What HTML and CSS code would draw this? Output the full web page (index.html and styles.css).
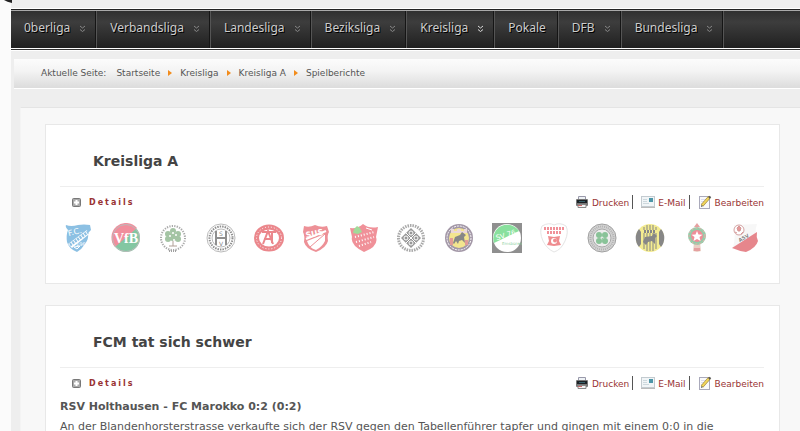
FILE: index.html
```html
<!DOCTYPE html>
<html lang="de">
<head>
    <meta charset="UTF-8">
    <meta name="viewport" content="width=device-width, initial-scale=1.0">
    <title>Kreisliga A - Spielberichte</title>
    <link rel="stylesheet" href="styles.css">
</head>
<body>

    <!-- Shared icons -->
    <svg class="sprite" aria-hidden="true">
        <symbol id="chevrons" viewBox="0 0 7 8">
            <path d="M1 1l2.5 2L6 1M1 4.500l2.500 2L6 4.500" fill="none" stroke="currentColor"/>
        </symbol>
        <symbol id="plus" viewBox="0 0 9 9">
            <rect x=".5" y=".5" width="8" height="8" rx="1" fill="#aaa" stroke="#777"/>
            <path d="M4.500 2v5M2 4.500h5" stroke="#fff" stroke-width="2"/>
        </symbol>
        <symbol id="printer" viewBox="0 0 14 14">
            <path d="M3.500 1.500h7v4h-7z" fill="#eef2f5" stroke="#99a"/>
            <rect x="1" y="4" width="12" height="7" rx="1" fill="#777"/>
            <path d="M2 5h10v3H2z" fill="#1c2226"/>
            <path d="M4 6.500h6" stroke="#38606a"/>
            <path d="M3 9.500h8v3H3z" fill="#f4f4f4" stroke="#888"/>
            <path d="M3 10.500h4" stroke="#c66"/>
        </symbol>
        <symbol id="mail" viewBox="0 0 14 12">
            <rect x=".5" y=".5" width="13" height="10" fill="#f1f5f7" stroke="#c3cbd0"/>
            <path d="M0 11.500h14" stroke="#bbb"/>
            <rect x="8" y="2" width="4" height="4" fill="#4d96a8"/>
            <path d="M2 3.500h4M2 5.500h4M2 7.500h6" stroke="#cdd8dd"/>
        </symbol>
        <symbol id="edit" viewBox="0 0 14 14">
            <rect x="1.500" y="1.500" width="10" height="12" fill="#fafafa" stroke="#aab"/>
            <path d="M3 4.500h6M3 6.500h5M3 8.500h3" stroke="#dde"/>
            <path d="M4 10.500L11.500 2" stroke="#8a7430" stroke-width="3"/>
            <path d="M4 10.500L11 2.500" stroke="#f0d45c" stroke-width="2"/>
            <path d="M11 3l1.500-1.500" stroke="#555" stroke-width="2"/>
            <path d="M3 12l.5-2 1.500 1z" fill="#444"/>
        </symbol>
    </svg>

    <svg class="corner" viewBox="0 0 8 3" aria-hidden="true"><path d="M0 0h8v3Q3 2 0 0z" fill="#222"/></svg>

    <div class="page">
        <nav class="menu">
            <ul>
                <li><a class="parent" href="#">0berliga<svg><use href="#chevrons"/></svg></a></li>
                <li><a class="parent" href="#">Verbandsliga<svg><use href="#chevrons"/></svg></a></li>
                <li><a class="parent" href="#">Landesliga<svg><use href="#chevrons"/></svg></a></li>
                <li><a class="parent" href="#">Beziksliga<svg><use href="#chevrons"/></svg></a></li>
                <li><a class="parent active" href="#">Kreisliga<svg><use href="#chevrons"/></svg></a></li>
                <li><a href="#">Pokale</a></li>
                <li><a class="parent" href="#">DFB<svg><use href="#chevrons"/></svg></a></li>
                <li><a class="parent" href="#">Bundesliga<svg><use href="#chevrons"/></svg></a></li>
            </ul>
        </nav>

        <div class="breadcrumbs">
            <span class="here">Aktuelle Seite:</span>
            <a href="#">Startseite</a>
            <span class="arrow"></span>
            <a href="#">Kreisliga</a>
            <span class="arrow"></span>
            <a href="#">Kreisliga A</a>
            <span class="arrow"></span>
            <span>Spielberichte</span>
        </div>

        <main class="content">
            <article class="card">
                <h2>Kreisliga A</h2>
                <div class="info">
                    <a class="details" href="#"><svg><use href="#plus"/></svg>Details</a>
                    <ul class="actions">
                        <li><a href="#"><svg><use href="#printer"/></svg>Drucken</a></li>
                        <li><a href="#"><svg><use href="#mail"/></svg>E-Mail</a></li>
                        <li><a href="#"><svg><use href="#edit"/></svg>Bearbeiten</a></li>
                    </ul>
                </div>

                <!-- Club crests -->
                <div class="clubs">
                    <svg viewBox="0 0 30 30">
                        <path d="M3 2q5 2 12 0 6-1 12 0l1 5-3 3q1 6-3 11-3 5-8 8-8-3-10-10-1-7 1-12-3-3-2-5z" fill="#1b83c9"/>
                        <path d="M5 21L24 7l1 5L9 25z" fill="#fff"/>
                        <path d="M7 22L25 9" stroke="#1b83c9" stroke-width="3" stroke-dasharray="2 1"/>
                        <text x="5" y="12" font-size="8" fill="#fff" transform="rotate(-14 10 10)">F.C.</text>
                        <path d="M11 24l6-1-3 3z" fill="none" stroke="#fff"/>
                        <text x="13" y="23" font-size="5" fill="#fff">1960</text>
                    </svg>
                    <svg viewBox="0 0 30 30">
                        <circle cx="15" cy="15" r="14" fill="#0a9148"/>
                        <path d="M4 24A14 14 0 0 1 26 5z" fill="#e5203c"/>
                        <circle cx="15" cy="15" r="13.500" fill="none" stroke="#777"/>
                        <text x="15" y="20" font-size="14" font-weight="bold" text-anchor="middle" fill="#fff" class="crest-serif">VfB</text>
                    </svg>
                    <svg viewBox="0 0 30 30">
                        <circle cx="15" cy="15" r="12" fill="none" stroke="#555" stroke-width="2" stroke-dasharray="1 1" pathLength="60"/>
                        <path d="M15 13v10M11 23h8" stroke="#643"/>
                        <g fill="#4c8b4c"><circle cx="15" cy="8" r="3"/><circle cx="10" cy="11" r="3"/><circle cx="20" cy="11" r="3"/><circle cx="10" cy="16" r="3"/><circle cx="20" cy="16" r="3"/><circle cx="15" cy="14" r="4"/></g>
                        <g fill="#fff"><circle cx="12" cy="13" r="1"/><circle cx="18" cy="12" r="1"/><circle cx="15" cy="10" r="1"/><circle cx="16" cy="17" r="1"/></g>
                        <path d="M11 28h8" stroke="#444" stroke-width="2" stroke-dasharray="1 1"/>
                    </svg>
                    <svg viewBox="0 0 30 30">
                        <g fill="none" stroke="#222">
                            <circle cx="15" cy="15" r="14" stroke="#777"/>
                            <circle cx="15" cy="15" r="9" stroke="#777"/>
                            <circle cx="15" cy="15" r="11.500" stroke-width="2" stroke-dasharray="1.500 1"/>
                            <path d="M10 8v14M20 8v14M10 15h10" stroke-width="2"/>
                        </g>
                        <text x="15" y="13" font-size="6" text-anchor="middle">S</text>
                        <text x="15" y="23" font-size="6" text-anchor="middle">V</text>
                    </svg>
                    <svg viewBox="0 0 30 30">
                        <g fill="none" stroke="#d8121c">
                            <ellipse cx="15" cy="15" rx="12.500" ry="11" stroke-width="5"/>
                            <path d="M9 21l5-13 5 13M8 9h14M18 9v11M10 16h9" stroke-width="2"/>
                        </g>
                        <ellipse cx="15" cy="15" rx="12.500" ry="11" fill="none" stroke="#fff" stroke-dasharray="1 2"/>
                    </svg>
                    <svg viewBox="0 0 30 30">
                        <path d="M3 3q5 2 11-1 6 3 12 1l2 6q-2 3-1 9-2 7-12 11Q5 26 3 19q1-6-1-10z" fill="#dd2531"/>
                        <path d="M6 18l18-7v7q-3 6-9 9-7-2-9-9z" fill="#fff"/>
                        <path d="M5 16L25 8" stroke="#fff" stroke-width="2"/>
                        <text x="5" y="13" font-size="8" font-weight="bold" fill="#fff" transform="rotate(-12 15 13)">SUS</text>
                        <path d="M9 24L24 11" stroke="#dd2531"/>
                    </svg>
                    <svg viewBox="0 0 30 30">
                        <path d="M1 5q8 1 13-4 6 5 15 3l-2 10q3 9-12 15Q1 22 3 14z" fill="#e32636"/>
                        <path d="M5 6l3-3 3 2 2 4-4 2-5-1z" fill="#48b738"/>
                        <g fill="none" stroke="#fff"><path d="M6 14L25 9M7 19l18-5M10 23l12-4" stroke-width="2" stroke-dasharray="1 2"/><path d="M17 5l6 2"/></g>
                    </svg>
                    <svg viewBox="0 0 30 30">
                        <circle cx="15" cy="15" r="12.500" fill="none" stroke="#555" stroke-width="3" stroke-dasharray="1.500 1"/>
                        <path d="M15 5l10 10-10 10L5 15z" fill="#333"/>
                        <path d="M10 10l10 10M20 10L10 20" stroke="#fff"/>
                        <g fill="none" stroke="#fff"><circle cx="15" cy="10" r="2"/><circle cx="15" cy="20" r="2"/><circle cx="10" cy="15" r="2"/><circle cx="20" cy="15" r="2"/></g>
                    </svg>
                    <svg viewBox="0 0 30 30">
                        <circle cx="15" cy="15" r="14" fill="#4a3352"/>
                        <circle cx="15" cy="15" r="12" fill="none" stroke="#fff" stroke-dasharray="2 1"/>
                        <circle cx="15" cy="15" r="10" fill="#e8cd21"/>
                        <path d="M7 10V6h3v2h3V6h4v2h3V6h3v4z" fill="#d8b2b2"/>
                        <path d="M9 20l2-6 5-2 2-3 4 3-2 2 1 6-3-3-3 1-1 3-2-3-2 3z" fill="#111"/>
                        <path d="M6 15h3v7H6zM21 17h3v5h-3z" fill="#c43c32"/>
                    </svg>
                    <svg viewBox="0 0 30 30">
                        <path d="M0 0h30v30H0z" fill="#222"/>
                        <circle cx="15" cy="15" r="14" fill="#fff"/>
                        <path d="M2 20A14 14 0 0 1 27 8z" fill="#15c33d"/>
                        <text x="4" y="14" font-size="7" fill="#fff" transform="rotate(-18 15 13)">SV 76</text>
                        <text x="10" y="22" font-size="4" fill="#15a33d">Emsbüren</text>
                    </svg>
                    <svg viewBox="0 0 30 30">
                        <path d="M3 3q7-4 12-1 6-3 12 1 3 6-1 15-4 9-11 11Q8 26 4 18 0 9 3 3z" fill="#fff" stroke="#ccc"/>
                        <path d="M5 5.500h20M8 9.500h14" stroke="#e32636" stroke-width="3" stroke-dasharray="2 1"/>
                        <path d="M9 13l6 1 6-1-1 5 2 4-7 1-7-1 2-4z" fill="#e01c22"/>
                        <circle cx="15" cy="18" r="3" fill="#fff"/><circle cx="16" cy="17.500" r="2" fill="#e01c22"/>
                    </svg>
                    <svg viewBox="0 0 30 30">
                        <circle cx="15" cy="15" r="14" fill="#aaa" stroke="#444"/>
                        <circle cx="15" cy="15" r="11.500" fill="none" stroke="#666" stroke-width="2" stroke-dasharray="1 1"/>
                        <circle cx="15" cy="15" r="9" fill="#ddd" stroke="#555"/>
                        <g fill="#168833"><circle cx="12" cy="12" r="3"/><circle cx="18" cy="12" r="3"/><circle cx="12" cy="18" r="3"/><circle cx="18" cy="18" r="3"/></g>
                        <path d="M15 15l4 6" stroke="#168833"/>
                    </svg>
                    <svg viewBox="0 0 30 30">
                        <circle cx="15" cy="15" r="14" fill="#eada24"/>
                        <path d="M4 6a14 14 0 0 0 0 18l2-3V9zM26 6a14 14 0 0 1 0 18l-2-3V9z" fill="#111"/>
                        <path d="M9 4v22M12 2v26M15 2v26M18 2v26M21 4v22" stroke="#111"/>
                        <path d="M7 7h16v3H7z" fill="#eada24"/>
                        <path d="M9 8.500h12" stroke="#111" stroke-width="3" stroke-dasharray="2 1"/>
                        <path d="M8 19l2-5 7-1 2-3 3 3-2 2v6l-3-3-4 1-2 3z" fill="#111"/>
                    </svg>
                    <svg viewBox="0 0 30 30">
                        <path d="M12 20h6l1 8-4 1-4-1z" fill="#d9a08c"/>
                        <path d="M12 4l3-4 3 4zM12 25h6v3h-6z" fill="#c44"/>
                        <circle cx="15" cy="13" r="9" fill="#2b9c55"/>
                        <circle cx="15" cy="13" r="8" fill="none" stroke="#e55" stroke-dasharray="2 2"/>
                        <circle cx="15" cy="13" r="6" fill="#df1f34"/>
                        <path d="M15 8l1.500 3.500 4 .2-3 2.300 1 4-3.500-2-3.500 2 1-4-3-2.300 4-.2z" fill="#fff"/>
                    </svg>
                    <svg viewBox="0 0 30 30">
                        <path d="M4 2l23-1q-2 6-1 10L3 25q3-12 1-23z" fill="#f1f1f1"/>
                        <path d="M2 25L27 9q-1 5 1 9-2 7-12 11-7-1-14-4z" fill="#cf101c"/>
                        <circle cx="9" cy="7" r="5" fill="#fff" stroke="#a44"/>
                        <path d="M7 5l2-2 2 2-1 3H8zM5 9l2 1M13 9l-2 2" fill="#c33" stroke="#a33"/>
                        <text x="8" y="17" font-size="5" font-weight="bold" transform="rotate(-32 13 15)">ASV</text>
                    </svg>
                </div>
            </article>

            <article class="card">
                <h2>FCM tat sich schwer</h2>
                <div class="info">
                    <a class="details" href="#"><svg><use href="#plus"/></svg>Details</a>
                    <ul class="actions">
                        <li><a href="#"><svg><use href="#printer"/></svg>Drucken</a></li>
                        <li><a href="#"><svg><use href="#mail"/></svg>E-Mail</a></li>
                        <li><a href="#"><svg><use href="#edit"/></svg>Bearbeiten</a></li>
                    </ul>
                </div>
                <h3>RSV Holthausen - FC Marokko 0:2 (0:2)</h3>
                <p>An der Blandenhorsterstrasse verkaufte sich der RSV gegen den Tabellenführer tapfer und gingen mit einem 0:0 in die</p>
            </article>
        </main>
    </div>

</body>
</html>
```

FILE: styles.css
```css
* { box-sizing: border-box; }
body {
    margin: 0;
    background-color: #fbfbfb;
    color: #555;
    font-family: "DejaVu Sans", Verdana, sans-serif;
    font-size: 11px;
}
a { color: inherit; text-decoration: none; }
ul { margin: 0; padding: 0; list-style: none; }
.sprite { position: absolute; width: 0; height: 0; }
.corner { position: absolute; top: 0; left: 4px; width: 8px; height: 3px; }

.page {
    margin-left: 11px;
    padding-top: 9px;
    background-color: #eee;
}

/* Main menu */
.menu {
    border-top: 1px solid #222;
    border-bottom: 1px solid #333;
    box-shadow: 0 1px #fff, 0 -1px #fff;
}
.menu ul {
    display: flex;
    height: 39px;
    border-top: 1px solid #aaa;
    border-bottom: 1px solid #fff;
    background: linear-gradient(#303030, #3d3d3d 30%, #202020);
}
.menu li {
    border-right: 1px solid #555;
    box-shadow: inset -1px 0 #151515;
}
.menu a {
    display: flex;
    align-items: center;
    height: 32px;
    padding: 0 12px 0 13px;
    color: #ccc;
    font-family: "Noto Sans", Tahoma, sans-serif;
    font-size: 12px;
    text-shadow: 1px 1px #000;
}
.menu .parent { padding-right: 10px; }
.menu svg {
    width: 7px;
    height: 8px;
    margin: 4px 0 0 9px;
    color: #888;
}
.menu .active svg { color: #ddd; }

.breadcrumbs {
    display: flex;
    align-items: center;
    height: 30px;
    margin: 9px 0 0 3px;
    padding: 0 0 2px 27px;
    border-bottom: 1px solid #fff;
    background: linear-gradient(#fcfcfc, #f4f4f4 40%, #dcdcdc);
    font-size: 9px;
}
.here { margin-right: 10px; }
.arrow {
    margin: 0 8px;
    border: 3px solid transparent;
    border-left: 4px solid #f28c1c;
    border-right: 0;
}

.content {
    margin: 18px 0 0 9px;
    padding: 16px 20px 0 24px;
    border-top: 1px solid #e4e4e4;
    border-left: 1px solid #f4f4f4;
    background-color: #f8f8f8;
}
.card {
    margin-bottom: 21px;
    padding: 0 15px 30px 14px;
    border: 1px solid #e8e8e8;
    background-color: #fff;
}
.card h2 {
    margin: 0;
    padding: 11px 33px 0;
    border-bottom: 1px solid #eee;
    color: #444;
    font-size: 14px;
    line-height: 50px;
}
.info {
    display: flex;
    justify-content: space-between;
    height: 31px;
    padding-top: 8px;
}
.details {
    display: flex;
    align-items: center;
    height: 14px;
    padding-left: 12px;
    color: #933;
    font-size: 8px;
    font-weight: bold;
    letter-spacing: 2px;
}
.details svg { width: 9px; height: 9px; margin-right: 8px; }

.actions {
    display: flex;
    gap: 8px;
    color: #933;
    font-size: 9px;
}
.actions li {
    height: 14px;
    padding-right: 3px;
    border-right: 1px solid #555;
}
.actions li:last-child { padding-right: 0; border: 0; }
.actions a { display: flex; line-height: 16px; }
.actions svg { width: 14px; height: 14px; margin-right: 3px; }

.clubs {
    display: flex;
    justify-content: space-between;
    padding: 5px 4px 0 3px;
}
.clubs svg { width: 30px; height: 30px; opacity: 0.5; }
.crest-serif { font-family: "Liberation Serif", serif; }

.card h3 { margin: 0; font-size: 11px; line-height: 16px; }
.card p { margin: 0; line-height: 23px; }
```
